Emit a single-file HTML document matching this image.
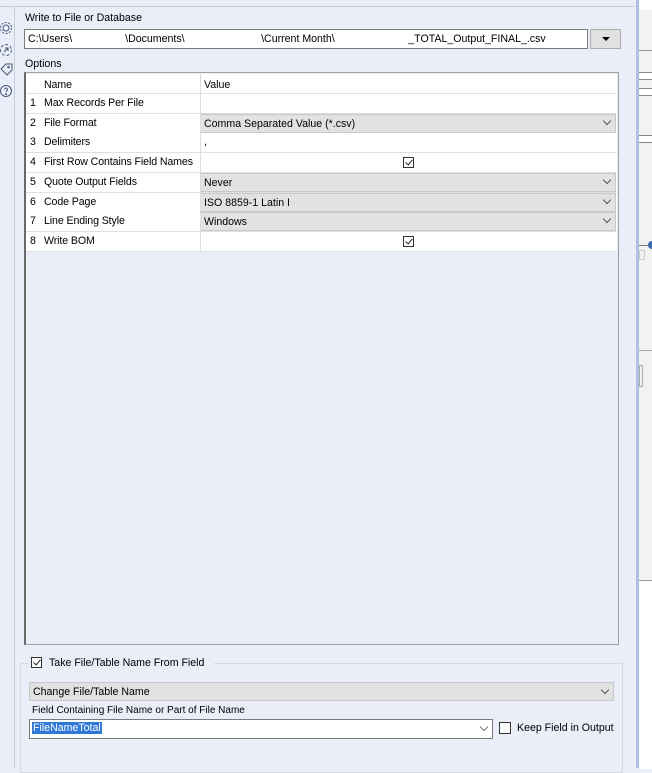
<!DOCTYPE html>
<html><head><style>
body{margin:0;width:652px;height:768px;position:relative;background:#e9eef8;font-family:"Liberation Sans",Arial,sans-serif;font-size:10.6px;color:#000;overflow:hidden}
.a{position:absolute}
.row{position:absolute;left:26px;width:591px;height:19px;border-bottom:1px solid #e0e0e0;background:#fff}
.row .n{position:absolute;left:4px;top:3px}
.row .k{position:absolute;left:18px;top:3px;letter-spacing:-0.1px}
.row .v{position:absolute;left:174px;top:0;width:416px;height:19px;border-left:1px solid #ddd}
.dd{background:#e2e2e2;border:1px solid #c8c8c8;box-sizing:border-box}
.v span{position:absolute;left:3px;top:3px}
.chev{position:absolute;right:5px;top:3px;width:5px;height:5px;border-right:1px solid #555;border-bottom:1px solid #555;transform:rotate(45deg)}
.cb{position:absolute;width:11px;height:11px;border:1px solid #333;background:#fff;box-sizing:border-box}
.cb.on::after{content:"";position:absolute;left:3px;top:0px;width:3px;height:6px;border-right:1.3px solid #222;border-bottom:1.3px solid #222;transform:rotate(40deg)}
</style></head><body>
<div class="a" style="left:0;top:0;width:635px;height:6px;border-bottom:1px solid #c8cdd6;background:#e9eef8"></div>
<div class="a" style="left:14px;top:7px;width:1px;height:761px;background:#c9d0dc"></div>
<svg class="a" style="left:0;top:10px" width="14" height="90" viewBox="0 0 14 90" fill="none" stroke="#4a5a7a" stroke-width="1">
<circle cx="6" cy="18" r="3"/><circle cx="6" cy="18" r="5.5" stroke-dasharray="2 1.5"/>
<circle cx="6" cy="40" r="5.5" stroke-dasharray="3 2"/><path d="M4 42l4-4M5 38h3v3"/>
<path d="M1 59l5-5h6v6l-5 5z"/><circle cx="8.5" cy="57" r=".8"/>
<circle cx="6" cy="81" r="5.5"/><path d="M4.5 79.5a1.5 1.5 0 1 1 2 1.5v1"/><circle cx="6" cy="84" r=".5"/>
</svg>
<div class="a" style="left:25px;top:12px">Write to File or Database</div>
<div class="a" style="left:24px;top:29px;width:564px;height:20px;background:#fff;border:1px solid #7a7a7a;box-sizing:border-box"><span class="a" style="left:3px;top:3px;white-space:pre">C:\Users\                  \Documents\                          \Current Month\                         _TOTAL_Output_FINAL_.csv</span></div>
<div class="a" style="left:590px;top:29px;width:31px;height:20px;background:#e1e1e1;border:1px solid #adadad;box-sizing:border-box"><div class="a" style="left:11px;top:7px;border-left:4px solid transparent;border-right:4px solid transparent;border-top:4px solid #000"></div></div>
<div class="a" style="left:25px;top:58px">Options</div>
<div class="a" style="left:24px;top:72px;width:595px;height:573px;border:1px solid #a0a0a0;border-left:2px solid #6a6a6a;box-sizing:border-box;background:#eaeef7"></div>
<div class="row" style="top:74px"><span class="k" style="top:5px">Name</span><div class="v" style="border-left:1px solid #ddd"><span style="top:5px">Value</span></div></div>
<div class="row" style="top:94px"><span class="n">1</span><span class="k">Max Records Per File</span><div class="v"></div></div>
<div class="row" style="top:114px"><span class="n">2</span><span class="k">File Format</span><div class="v dd"><span>Comma Separated Value (*.csv)</span><i class="chev"></i></div></div>
<div class="row" style="top:133px"><span class="n">3</span><span class="k">Delimiters</span><div class="v"><span>,</span></div></div>
<div class="row" style="top:153px"><span class="n">4</span><span class="k">First Row Contains Field Names</span><div class="v"><div class="cb on" style="left:202px;top:4px"></div></div></div>
<div class="row" style="top:173px"><span class="n">5</span><span class="k">Quote Output Fields</span><div class="v dd"><span>Never</span><i class="chev"></i></div></div>
<div class="row" style="top:193px"><span class="n">6</span><span class="k">Code Page</span><div class="v dd"><span>ISO 8859-1 Latin I</span><i class="chev"></i></div></div>
<div class="row" style="top:212px"><span class="n">7</span><span class="k">Line Ending Style</span><div class="v dd"><span>Windows</span><i class="chev"></i></div></div>
<div class="row" style="top:232px"><span class="n">8</span><span class="k">Write BOM</span><div class="v"><div class="cb on" style="left:202px;top:4px"></div></div></div>
<div class="a" style="left:20px;top:663px;width:603px;height:110px;border:1px solid #d4d9e2;box-sizing:border-box"></div>
<div class="a" style="left:28px;top:656px;width:186px;height:14px;background:#e9eef8"></div>
<div class="cb on" style="left:31px;top:657px"></div>
<div class="a" style="left:49px;top:657px">Take File/Table Name From Field</div>
<div class="a dd" style="left:29px;top:682px;width:585px;height:19px;background:#e1e1e1"><span class="a" style="left:3px;top:3px">Change File/Table Name</span><i class="chev" style="top:4px"></i></div>
<div class="a" style="left:32px;top:705px;font-size:10px">Field Containing File Name or Part of File Name</div>
<div class="a" style="left:29px;top:719px;width:464px;height:20px;background:#fff;border:1px solid #7a7a7a;box-sizing:border-box"><span class="a" style="left:2px;top:2px;background:#3078d8;color:#fff;padding:0 1px">FileNameTotal</span><i class="chev" style="top:4px;border-color:#777"></i></div>
<div class="cb" style="left:499px;top:722px;width:12px;height:12px"></div>
<div class="a" style="left:517px;top:722px">Keep Field in Output</div>
<div class="a" style="left:636px;top:0;width:3px;height:768px;background:#b0c0e2"></div>
<div class="a" style="left:639px;top:0;width:13px;height:768px;background:#f2f2f2"></div>
<div class="a" style="left:639px;top:0;width:13px;height:10px;background:#fff"></div>
<div class="a" style="left:639px;top:50px;width:13px;height:1px;background:#999"></div>
<div class="a" style="left:639px;top:72px;width:13px;height:6px;border-top:1px solid #888;border-bottom:1px solid #888;background:#fff"></div>
<div class="a" style="left:639px;top:88px;width:13px;height:6px;border-top:1px solid #888;border-bottom:1px solid #888;background:#fff"></div>
<div class="a" style="left:639px;top:135px;width:13px;height:6px;border-top:1px solid #888;border-bottom:1px solid #888;background:#fff"></div>
<div class="a" style="left:639px;top:245px;width:10px;height:1px;background:#777"></div>
<div class="a" style="left:648px;top:241px;width:4px;height:8px;background:#3a6ab0;border-radius:4px 0 0 4px"></div>
<div class="a" style="left:639px;top:250px;width:4px;height:8px;border:1px solid #ccc"></div>
<div class="a" style="left:639px;top:350px;width:13px;height:1px;background:#aaa"></div>
<div class="a" style="left:639px;top:365px;width:2px;height:20px;border:1px solid #aaa"></div>
<div class="a" style="left:639px;top:580px;width:13px;height:188px;background:#fff;border-top:1px solid #999"></div>
</body></html>
